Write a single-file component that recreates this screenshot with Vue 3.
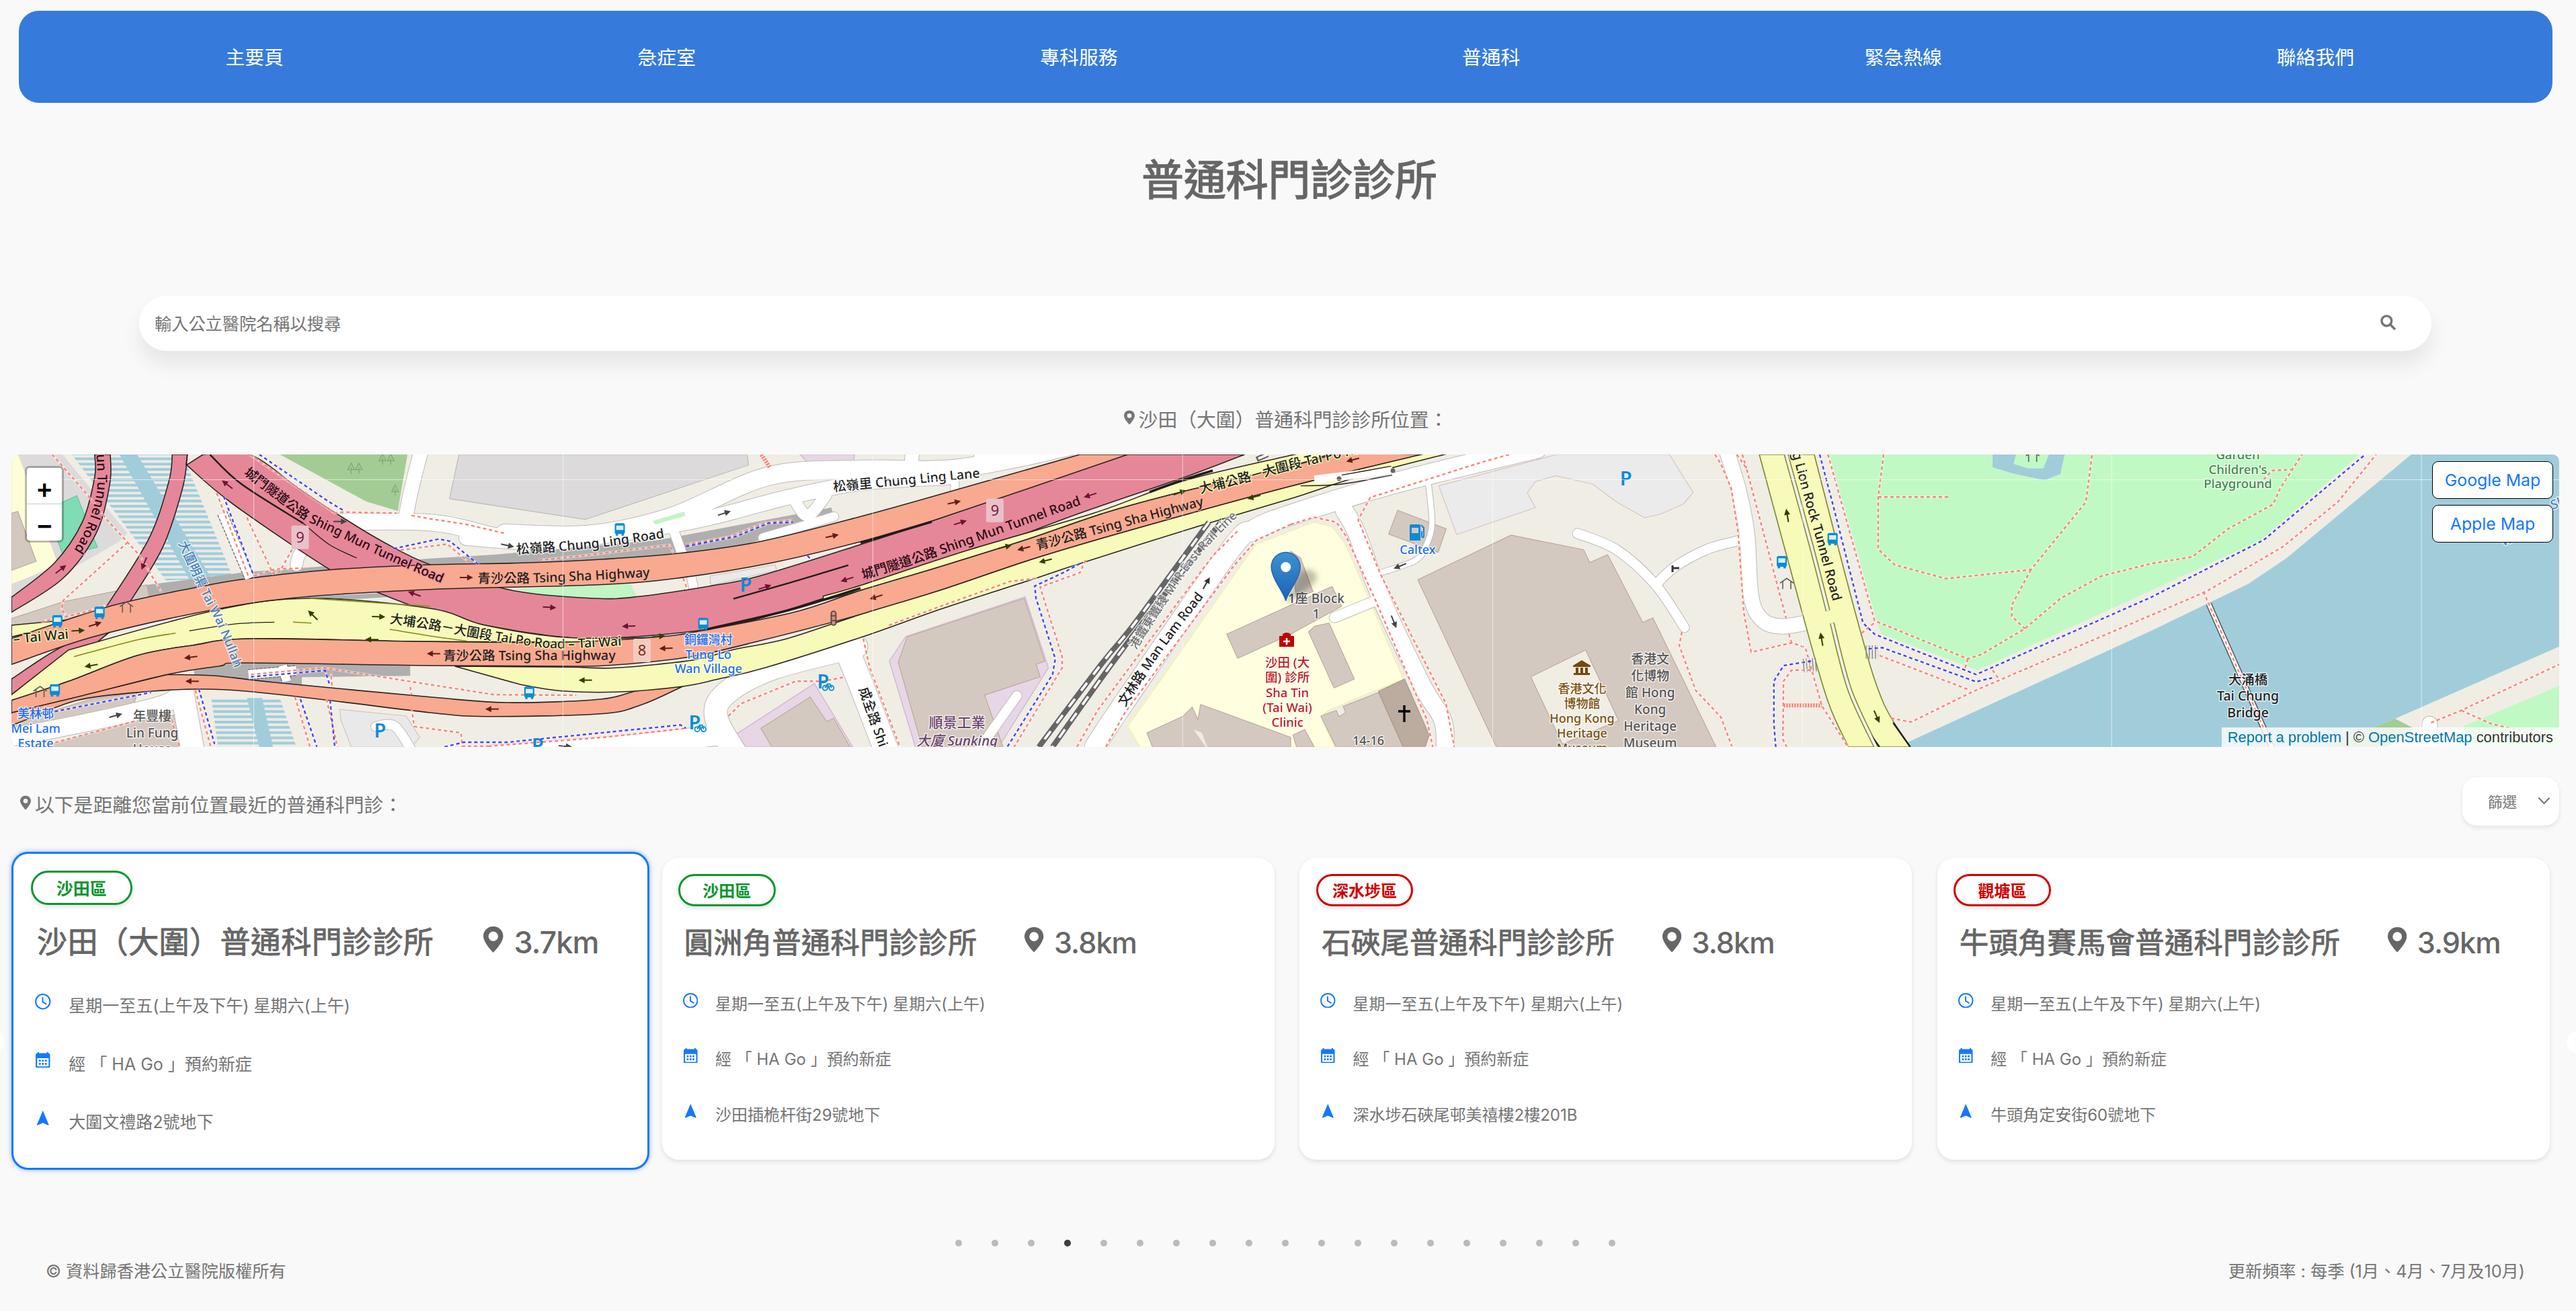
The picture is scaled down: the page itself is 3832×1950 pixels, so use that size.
<script setup>
const navItems = ['主要頁', '急症室', '專科服務', '普通科', '緊急熱線', '聯絡我們']

const clinics = [
  { district: '沙田區', tone: 'green', name: '沙田（大圍）普通科門診診所', km: '3.7km', address: '大圍文禮路2號地下', active: true },
  { district: '沙田區', tone: 'green', name: '圓洲角普通科門診診所', km: '3.8km', address: '沙田插桅杆街29號地下' },
  { district: '深水埗區', tone: 'red', name: '石硤尾普通科門診診所', km: '3.8km', address: '深水埗石硤尾邨美禧樓2樓201B' },
  { district: '觀塘區', tone: 'red', name: '牛頭角賽馬會普通科門診診所', km: '3.9km', address: '牛頭角定安街60號地下' },
]

// Map geometry is stored on a finer grid than the drawing; KX and KY scale it down.
const KX = 1 / 2.45
const KY = 1 / 3
const pt = (s) => s.trim().split(/\s+/).map((p) => {
  const [x, y] = p.split(',').map(Number)
  return [+(x * KX).toFixed(1), +(y * KY).toFixed(1)]
})
const poly = (s) => pt(s).map((p) => p.join(',')).join(' ')
const X = (x) => x * KX
const Y = (y) => y * KY

// Catmull-Rom spline through the points
const curve = (list) => {
  let d = ''
  for (let i = 0; i < list.length - 1; i++) {
    const p0 = list[i - 1] || list[i]
    const p1 = list[i]
    const p2 = list[i + 1]
    const p3 = list[i + 2] || p2
    d += `C${(p1[0] + (p2[0] - p0[0]) / 6).toFixed(1)} ${(p1[1] + (p2[1] - p0[1]) / 6).toFixed(1)} ${(p2[0] - (p3[0] - p1[0]) / 6).toFixed(1)} ${(p2[1] - (p3[1] - p1[1]) / 6).toFixed(1)} ${p2[0]} ${p2[1]}`
  }
  return d
}
const spline = (s) => { const l = pt(s); return `M${l[0].join(' ')}${curve(l)}` }
const band = (s) => {
  const [a, b] = s.split('|').map(pt)
  return `M${a[0].join(' ')}${curve(a)}L${b[0].join(' ')}${curve(b)}Z`
}

const areas = [
  ['#fdfdd8', '42,48 65,48 240,560 42,625', '#f3f2a0'],
  ['#dcdada', '68,48 228,48 465,400 430,440 280,545 150,590 42,680 42,628 212,540'],
  ['#d4c9c0', '42,310 65,302 132,525 42,565', '#bda99c'],
  ['#7fdcb5', '228,260 280,232 355,462 230,497 185,350', '#5cc9a0'],
  ['url(#nullah)', '262,48 665,48 850,600 605,610'],
  ['#a1cddb', '435,48 500,48 790,640 715,660'],
  ['url(#nullah)', '770,1135 1020,1135 1080,1353 795,1353'],
  ['#a1cddb', '900,1135 955,1135 995,1353 945,1353'],
  ['#a3cc95', '1020,48 1485,48 1450,300 1335,258'],
  ['#dcdadb', '1673,48 2723,48 2728,95 2133,338 1638,245', '#bcbaba'],
  ['#e7d6e5', '2915,48 3115,48 3110,80 2945,85', '#c9b5cc'],
  ['#d4c9c0', '42,780 230,705 535,630 545,690 42,900', '#b5a79c'],
  ['#b0afaf', '535,630 900,572 1568,512 1800,495 2400,430 3030,285 3036,312 2700,460 2400,520 1568,570 900,640 545,690'],
  ['#b0afaf', '1100,685 1568,655 1568,672 1240,698'],
  ['#b0afaf', '705,1000 900,975 1495,985 1495,1036 1100,1042 1100,1075 710,1040'],
  ['#d4c9c0', '42,1250 330,1140 500,1110 490,1155 42,1290', '#b5a79c'],
  ['#d4c9c0', '150,1353 470,1245 640,1210 650,1353', '#bda99c'],
  ['#eae9e9', '1238,1185 1480,1215 1530,1310 1500,1353 1280,1353 1242,1230', '#d4c3c3'],
  ['#eaeae8', '2588,590 2825,540 2830,565 2590,632', '#d4c3c3'],
  ['#e7d6e5', '2678,1300 2968,1070 3043,1220 3108,1353 2700,1353', '#c9b5cc'],
  ['#d4c9c0', '2773,1270 2953,1130 3013,1240 3038,1225 3098,1353 2813,1353', '#bda99c'],
  ['#e7d6e5', '3301,860 3736,683 3821,1000 3640,1353 3336,1353 3241,970', '#c9b5cc'],
  ['#d4c9c0', '3306,862 3733,690 3808,970 3776,985 3791,1040 3588,1122 3656,1353 3361,1353 3274,975', '#bda99c'],
  ['#ffffe0', '4576,450 4704,390 4789,350 4854,370 4904,450 5114,1050 4840,1190 4814,1220 4865,1353 4156,1353 4111,1260 4236,1045', '#f5f29c'],
  ['#d4c9c0', '4704,480 4740,510 4785,660 4725,690', '#bda99c'],
  ['#d4c9c0', '4471,850 4704,720 4855,637 4890,725 4704,850 4511,958', '#bda99c'],
  ['#d4c9c0', '4790,815 4844,800 4936,1050 4862,1090 4769,840', '#bda99c'],
  ['#d4c9c0', '4180,1290 4313,1215 4345,1175 4366,1230 4376,1163 4704,1310 4704,1353 4200,1353', '#bda99c'],
  ['#f0ede5', '4350,1275 4380,1290 4400,1353 4395,1353'],
  ['#d4c9c0', '4814,1215 4870,1190 4880,1217 4905,1200 4895,1172 5024,1110 5114,1353 4869,1353', '#bda99c'],
  ['#d4c9c0', '4712,1300 4755,1275 4790,1353 4725,1353', '#bda99c'],
  ['#bbac9f', '5024,1105 5119,1050 5209,1300 5194,1353 5114,1353', '#a89a8e'],
  ['#ebebeb', '5244,188 5674,48 6084,48 6171,218 6134,270 6054,313 5994,330 5894,262 5804,180 5669,143 5597,168 5566,218 5596,285 5309,405', '#d8c4c4'],
  ['#d4c9c0', '5094,297 5271,380 5241,485 5061,403', '#bda99c'],
  ['#d4c9c0', '5167,607 5507,408 5772,473 5794,530 5859,495 5987,797 6024,777 6254,1353 5454,1353', '#bda99c'],
  ['#f0ede5', '5579,1040 5779,920 5899,1235 5694,1340', '#bda99c'],
  ['#c1f9c4', '6667,48 6842,800 6857,850 7207,1010 7840,655 8240,430 8600,48'],
  ['#a1cddb', '7262,48 7525,48 7509,135 7452,163 7337,133 7262,105'],
  ['#c1f9c4', '7347,48 7467,48 7447,110 7392,110 7339,90'],
  ['#a1cddb', '6957,1330 7840,835 8195,625 8334,510 8788,48 9327,48 9327,905 8729,1227 8610,1290 8500,1353 6900,1353'],
  ['#c1f9c4', '9327,1080 8980,1260 8950,1353 9327,1353'],
  ['#a3cc95', '8729,1227 8800,1272 8700,1353 8480,1353'],
]

// [points, width] – minor roads: grey casing with a white fill
const roads = [
  ['1535,30 1500,200 1475,350', 21],
  ['1080,540 1100,480 1200,380', 18],
  ['1200,350 1568,352 1800,410 1900,430', 24],
  ['1840,400 2150,405 2450,325 2800,145 3136,115 3450,115 3700,65 3900,10', 27],
  ['1700,420 1980,440 2268,400 2568,335 2868,240 3136,175 3450,150', 22],
  ['3328,10 3318,120', 20], ['3580,30 3560,110', 18], ['3480,150 3480,210', 12],
  ['2455,385 2485,490', 14],
  ['2520,600 2530,655', 13],
  ['2900,260 2945,320 3010,230', 17],
  ['2780,420 3040,325', 13],
  ['42,1310 350,1235 600,1160 660,1100', 26],
  ['660,1080 700,1353', 34],
  ['1370,1262 1440,1262 1510,1390', 14],
  ['1800,1390 2068,1365 2300,1345 2620,1300', 30],
  ['3120,905 2820,1000 2650,1110 2610,1220 2690,1400', 34],
  ['3080,900 3146,1100 3240,1400', 36],
  ['3706,1125 3570,1360', 14],
  ['5600,20 5100,170 4704,318 4570,385 4480,480 4100,1150 3990,1353', 30],
  ['4900,300 4945,400 5030,680 5184,1080 5260,1240 5265,1400', 26],
  ['5204,160 5219,350 5199,450 5159,520 5034,575', 8],
  ['4864,775 5014,700', 15],
  ['5749,400 5894,475 6034,630 6139,820', 14],
  ['6034,630 6104,550 6224,470 6345,430', 14],
  ['6290,20 6335,200 6367,400 6382,680 6422,785 6492,815 6600,795', 22],
  ['8855,1250 8855,1400', 22],
]

const bands = [
  ['#e58799', '345,48 345,150 300,350 200,530 42,685|42,752 230,600 350,400 400,180 402,48'],
  ['#e58799', '42,1050 220,910 400,820|400,840 200,1030 42,1120'],
  ['#e58799', '628,48 615,170 540,430 370,760|450,750 590,470 665,200 683,48'],
  ['#e58799', '740,48 910,48 1100,210 1250,330 1400,440 1568,540 1868,655 2168,690 2328,682 2588,635 2768,590 3136,450 3396,345 4096,48|4536,48 4316,150 3936,310 3536,490 3136,637 2768,780 2568,830 2268,865 2068,865 1768,810 1568,750 1370,660 1200,560 850,270 680,95'],
  ['#f7fab8', '250,920 780,745 1130,690 1568,735 1768,810 2068,865 2400,864|2400,890 2068,885 1568,883 920,870 700,900 500,945 250,1060 42,1145 42,1120'],
  ['#f7fab8', '42,810 300,780|250,800 42,862'],
  ['#f9a990', '42,870 400,725 720,640 900,602 1210,562 1568,540 1900,532 2200,515 2468,490 2768,437 3136,325 3500,200 3936,48|4110,48 3396,345 3136,437 2818,530 2468,600 2168,630 1568,650 1100,685 780,740 350,858 42,985'],
  ['#f7fab8', '3000,680 3136,632 3536,472 3986,310 4316,165 4704,52 4750,40|4860,40 4704,100 4306,215 4036,305 3736,430 3436,545 3136,655 3000,700'],
  ['#f9a990', '610,1030 780,1035 1000,1065 1568,1130 1848,1155 2188,1140 2330,1100 2488,1083|2488,1083 2338,1165 2188,1205 1768,1217 1568,1200 1200,1145 900,1105 740,1095 550,1105 280,1145 42,1255 42,1200'],
  ['#f9a990', '42,1145 250,1060 500,945 700,900 920,870 1568,883 2068,885 2400,862 2568,832 2900,750 3136,655 3436,545 3736,430 4036,305 4306,215 4704,100 4880,40|5184,48 4704,190 4136,380 3776,510 3436,650 3136,762 2768,880 2518,950 2268,985 2068,993 1568,990 900,978 800,992 610,1030 280,1130 42,1200'],
  ['#f7fab8', '1658,993 2068,997 2248,1000 2528,965 2668,920 2868,870 3136,762 3436,650 3776,510 4136,380 4704,190 5190,45|5290,40 4944,150 4704,245 4336,380 3936,535 3776,600 3436,735 3136,865 2788,1000 2618,1050 2488,1083 2248,1108 2048,1103 1898,1075'],
  ['#f7fab8', '6412,48 6572,770 6662,1150 6737,1353|6962,1353 6862,1150 6772,800 6612,48'],
]

// [class, points]
const lines = [
  ['edge', '765,48 880,180 1105,355'],
  ['edge thin', '683,48 678,95'],
  ['edge thin', '1105,355 1200,450 1300,510'],
  ['edge', '2673,692 2880,620 3092,542'],
  ['olive', '270,950 500,875 640,845'],
  ['edge thin', '690,835 850,805 1000,796'],
  ['olive', '1130,690 1350,708 1568,725'],
  ['olive', '1068,796 1135,800'],
  ['olive', '1420,828 1568,858 1700,880'],
  ['edge double', '2568,830 2868,745 3136,645'],
  ['edge double', '4190,215 4316,160 4420,120'],
  ['edge double', '3136,442 3396,348'],
  ['bridge', '4790,160 5075,118'],
  ['edge thin', '4740,188 4890,180 5074,140'],
  ['edge thin', '4890,140 5070,100'],
  ['median', '6510,48 6600,450 6662,745'],
  ['median', '6677,800 6742,1100 6837,1353'],
  ['edge', '6812,1290 6850,1353'],
  ['edge', '6900,1245 6962,1353'],
  ['rail', '4620,48 4580,70'],
  ['rail', '4406,350 4136,800 4016,980 3786,1353'],
  ['rail', '4456,340 4096,910 3836,1353'],
  ['pier', '8050,715 8175,1060 8280,1353'],
  ['deck', '1030,990 1045,1060'],
  ['deck', '905,1030 1080,1012'],
  ['deck', '810,310 910,600'],
  ['ties', '6572,990 6622,985'],
  ['ties', '6800,930 6845,930'],
]
const inlaid = lines.filter((l) => ['rail', 'pier', 'deck', 'median'].includes(l[0]))
const dotted = [
  ['red', '190,48 320,230 390,340 465,440 510,500 590,665'],
  ['red', '465,440 230,700 225,740 240,765'],
  ['red', '150,795 300,755 390,720'],
  ['red', '790,220 905,590'],
  ['blue', '815,235 925,590'],
  ['red', '900,330 995,580 1020,570 1070,460'],
  ['red', '925,590 1000,560 1100,555'],
  ['red', '910,48 1220,310 1250,305 1445,310'],
  ['blue', '945,48 1200,260 1255,300'],
  ['red', '1500,320 1568,335 1700,360 1840,400'],
  ['blue', '1435,468 1600,425 1640,435 1745,540'],
  ['red', '1460,475 1630,448 1710,530'],
  ['red', '915,1030 1180,1000 1568,1075 1800,1120 2100,1122'],
  ['blue', '915,1040 1185,1012 1200,1070'],
  ['red', '1205,1010 1210,1080'], ['red', '1495,1085 1500,1120'],
  ['red', '1190,1140 1230,1353'], ['blue', '1203,1145 1220,1353'],
  ['red', '1075,1130 1130,1353'], ['blue', '1095,1140 1155,1353'],
  ['blue', '725,1095 782,1340'], ['red', '712,1100 768,1353'],
  ['blue', '200,1195 550,1110'],
  ['red', '180,1340 500,1235'], ['red', '625,1230 655,1353'],
  ['red', '1500,1180 1510,1262 1680,1290 1685,1350 1780,1350'],
  ['blue', '1620,1353 1690,1332 1850,1332 2150,1295 2480,1255 2500,1270'],
  ['red', '1780,1350 2200,1310 2500,1270'],
  ['red', '1965,520 2120,500 2440,452 2455,490'],
  ['red', '2500,450 2660,415 2780,355 2890,340'], ['blue', '2500,458 2680,415 2800,355 2890,350'],
  ['red', '2490,600 2505,650'], ['blue', '2943,500 2955,515'],
  ['red bold', '2775,48 2805,105'],
  ['red', '2655,1215 2700,1160 2900,1060 3000,1060 3075,1042'],
  ['red', '3146,870 3170,1000 3280,1353'],
  ['red', '3240,810 3440,720 3680,615 3780,600'],
  ['blue', '3936,535 3876,575 3771,635 3776,690 3846,960 3836,1030 3671,1353'],
  ['red', '3956,520 3936,575 3791,640 3871,950 3871,1000 3696,1353'],
  ['red', '4510,390 4420,500 4000,1190 3925,1353'],
  ['red', '4704,360 4580,430 4500,540 4100,1200 4030,1353'],
  ['red', '4704,360 4789,328 4870,350 4905,410 5010,690 5200,1230 5222,1353'],
  ['red', '5500,48 5394,85 4994,240 4950,340 5030,580 5270,1160 5300,1353'],
  ['red', '6130,840 6120,900 6180,1100 6272,1220 6312,1350'],
  ['red', '6250,48 6272,90 6310,200 6335,400 6355,750 6382,930 6532,888 6580,910 6640,1170 6735,1353'],
  ['red', '6330,48 6365,110 6510,780'],
  ['red', '6350,48 6365,110'],
  ['red', '6520,850 6530,890'],
  ['blue', '6600,970 6500,990 6465,1060 6465,1250 6472,1353'],
  ['red', '6600,1010 6530,1010 6500,1060 6498,1320 6512,1353'],
  ['red bold', '6500,1168 6640,1168'],
  ['blue', '6632,48 6680,270 6790,800 6832,850 7202,1030 7840,685 8250,430 8620,48'],
  ['red', '6662,48 6832,790 7172,960 7222,940 7380,825 7510,690 7660,590 7840,535 7990,505 8120,380 8285,270 8310,200 8390,48'],
  ['red', '6785,845 6830,800'],
  ['red', '7172,960 7162,1000'],
  ['red', '6865,48 6845,240 6845,470 6905,540 7092,602 7402,562 7602,260 7625,48'],
  ['red', '6845,238 7100,238'],
  ['red', '7402,562 7332,720 7332,770 7380,825'],
  ['blue', '6810,915 6860,910 7202,1062 7260,1045'],
  ['red', '6850,945 7180,1100'],
  ['red', '7262,1010 7285,1050'],
  ['red', '6892,1225 6965,1242 7192,1105 7840,765 8040,660 8320,460 8520,260 8660,48'],
  ['red', '8220,200 8280,120 8350,115'],
  ['red', '8030,660 8050,715 8175,1060 8280,1353'],
  ['red', '8860,1245 8970,1190 9327,985'],
  ['red', '8970,1190 9080,1250 9327,1320'],
]

// [x, y, rotation, colour]
const arrows = [
  [222, 560, -38, '#6d1434'], [525, 535, 112, '#6d1434'], [828, 182, 218, '#6d1434'], [1240, 347, 0, '#444'],
  [285, 834, -3, '#333d00'], [347, 806, -18, '#611f14'], [332, 990, 170, '#333d00'], [695, 953, 172, '#611f14'],
  [700, 1060, 180, '#611f14'], [1140, 765, 225, '#333d00'], [1380, 772, 2, '#333d00'], [1355, 874, 180, '#333d00'],
  [1510, 670, 200, '#6d1434'], [1580, 937, 180, '#611f14'], [422, 1213, -15, '#444'],
  [1850, 454, 12, '#444'], [1700, 597, 0, '#611f14'], [2003, 730, 4, '#6d1434'], [2291, 814, 178, '#6d1434'],
  [2400, 860, -5, '#333d00'], [2427, 913, 178, '#611f14'], [2133, 1055, 180, '#333d00'], [1793, 1184, 180, '#611f14'],
  [2640, 310, -18, '#444'], [2788, 640, -18, '#6d1434'], [3087, 605, 162, '#6d1434'], [3033, 412, -12, '#611f14'],
  [2060, 1350, 5, '#444'],
  [3478, 262, -12, '#611f14'], [3500, 352, -18, '#6d1434'], [3973, 230, 162, '#6d1434'], [3663, 460, -14, '#333d00'],
  [3731, 467, 165, '#611f14'], [3810, 522, 165, '#333d00'], [3193, 684, 162, '#611f14'], [4300, 218, -20, '#333d00'],
  [4570, 238, 165, '#333d00'], [4397, 622, -60, '#333'], [4930, 72, 165, '#611f14'],
  [5102, 546, 158, '#444'], [5080, 795, 68, '#444'],
  [6514, 320, -100, '#333d00'], [6639, 872, -100, '#333d00'], [6840, 1218, 66, '#333d00'],
]

// [text, path, size, class]
const pathLabels = [
  ['un Tunnel Road', '352,48 352,220 312,380 262,490', 20, 'pink'],
  ['大圍明渠 Tai Wai Nullah', '650,445 735,670 800,830 885,1100', 18.5, 'water'],
  ['城門隧道公路 Shing Mun Tunnel Road', '888,135 1000,240 1110,338 1230,410 1400,510 1568,600 1680,660', 19.2, 'pink'],
  ['– Tai Wai', '50,892 260,868', 20, 'yellow'],
  ['青沙公路 Tsing Sha Highway', '1741,622 2000,617 2430,590', 19.4, 'salmon'],
  ['大埔公路－大圍段 Tai Po Road – Tai Wai', '1420,800 1568,827 1700,857 1810,880 1970,908 2090,912 2330,895', 19.2, 'yellow'],
  ['青沙公路 Tsing Sha Highway', '1615,967 2300,964', 19.4, 'salmon'],
  ['松嶺路 Chung Ling Road', '1883,492 2168,465 2470,410', 19.4, ''],
  ['松嶺里 Chung Ling Lane', '3038,213 3620,145', 19.4, ''],
  ['城門隧道公路 Shing Mun Tunnel Road', '3146,605 3416,500 4000,245', 19.5, 'pink'],
  ['青沙公路 Tsing Sha Highway', '3781,475 4450,255', 19.4, 'salmon'],
  ['大埔公路－大圍段 Tai Po Road', '4376,222 4560,165 4704,115 5000,30', 19.6, 'yellow'],
  ['港鐵東鐵綫 MTR East Rail Line', '4140,920 4266,680 4386,480 4590,230', 18, 'rail'],
  ['文林路 Man Lam Road', '4100,1175 4236,925 4420,630', 19.4, ''],
  ['成全路 Shing Chuen Road', '3130,1095 3240,1480', 19.6, ''],
  ['g Lion Rock Tunnel Road', '6532,42 6575,240 6622,440 6690,750', 19.6, 'yellow'],
]
// [lines, centre x, first baseline, line step, size, class]
const labels = [
  [['美林邨', 'Mei Lam', 'Estate'], 130, 1225, 65, 18, 'place'],
  [['年豐樓', 'Lin Fung', 'House'], 555, 1236, 74, 19, 'bldg'],
  [['銅鑼灣村', 'Tung Lo', 'Wan Village'], 2582, 895, 64, 18, 'place'],
  [['順景工業'], 3488, 1265, 80, 21, 'violet'],
  [['大廈 Sunking'], 3488, 1348, 80, 20.5, 'violet italic'],
  [['1座 Block', '1'], 4797, 712, 68, 19, 'bldg'],
  [['沙田 (大', '圍) 診所', 'Sha Tin', '(Tai Wai)', 'Clinic'], 4692, 996, 67, 18.5, 'clinic'],
  [['Caltex'], 5167, 492, 60, 18, 'place'],
  [['香港文化', '博物館', 'Hong Kong', 'Heritage', 'Museum'], 5766, 1112, 66, 18, 'museum'],
  [['香港文', '化博物', '館 Hong', 'Kong', 'Heritage', 'Museum'], 6014, 980, 75, 19, 'bldg'],
  [['14-16'], 4987, 1345, 60, 18, 'bldg'],
  [['Garden', "Children's", 'Playground'], 8156, 70, 64, 18.5, 'leisure'],
  [['大涌橋', 'Tai Chung', 'Bridge'], 8193, 1074, 73, 19.5, ''],
]
const shields = [[1062, 365, '9', '#e9c1ca', '#7c1d3d'], [3594, 245, '9', '#e9c1ca', '#7c1d3d'], [2308, 870, '8', '#f4cbc1', '#7a2c1c']]
const buses = [[363, 754], [209, 792], [200, 1100], [2259, 382], [2563, 804], [1929, 1111], [6679, 425], [6494, 528]]
const parks = [[1385, 1310], [2718, 660], [1960, 1378], [2532, 1275], [3000, 1092], [5926, 187]]
const bikes = [[2552, 1268], [3018, 1084]]
const shelters = [[461, 745], [146, 1122], [6512, 640], [7408, 72]]
const trees = [[1280, 110], [1308, 110], [1394, 70], [1424, 70], [1440, 208]]
const gridX = [925, 2052, 3181, 4310, 5440, 6569, 7696, 8825]
</script>

<template>
  <div class="page">
    <nav class="nav">
      <a v-for="item in navItems" :key="item">{{ item }}</a>
    </nav>

    <h1 class="title">普通科門診診所</h1>

    <div class="search">
      <span>輸入公立醫院名稱以搜尋</span>
      <svg class="search-icon" viewBox="0 0 24 24"><circle cx="9.3" cy="9.3" r="7.4" /><path d="M14.7 14.7l7.3 7.3" /></svg>
    </div>

    <p class="caption">
      <svg class="pin" viewBox="0 0 28 37"><path fill-rule="evenodd" d="M14 0C6 0 0 6 0 13.8 0 23 14 37 14 37s14-14 14-23.2C28 6 22 0 14 0zm0 8.2a5.8 5.8 0 1 1 0 11.6 5.8 5.8 0 0 1 0-11.6z" /></svg>
      <span>沙田（大圍）普通科門診診所位置：</span>
    </p>

    <section class="map">
      <svg class="map-canvas" viewBox="17 16 3790 435" width="3790" height="435">
        <defs>
          <pattern id="nullah" width="10" height="7.83" y="20.5" patternUnits="userSpaceOnUse">
            <rect width="10" height="7.83" fill="#edebe5" /><rect width="10" height="4" fill="#a1cddb" />
          </pattern>
          <linearGradient id="markerFill" x1="0" y1="0" x2="0" y2="1">
            <stop offset="0" stop-color="#3d92cf" /><stop offset="1" stop-color="#1a62b8" />
          </linearGradient>
          <filter id="soft" x="-50%" y="-50%" width="200%" height="200%"><feGaussianBlur stdDeviation="4" /></filter>
        </defs>
        <rect x="17" y="16" width="3790" height="435" fill="#f0ede5" />
        <polygon v-for="(a, i) in areas" :key="'a' + i" :points="poly(a[1])" :fill="a[0]" :stroke="a[2] || 'none'" stroke-width="1.2" />

        <g fill="none" stroke-linecap="round" stroke-linejoin="round">
          <path v-for="(r, i) in roads" :key="'c' + i" :d="spline(r[0])" stroke="#bdbbb8" :stroke-width="r[1] + 2" />
          <path v-for="(r, i) in roads" :key="'r' + i" :d="spline(r[0])" stroke="#fff" :stroke-width="r[1]" />
        </g>
        <polygon :points="poly('1870,648 2298,625 2323,686 2168,692 1968,674')" fill="#c1f5c4" />
        <polygon :points="poly('2378,345 2493,303 2498,322 2388,360')" fill="#c1f5c4" />
        <path v-for="(b, i) in bands" :key="'b' + i" :d="band(b[1])" :fill="b[0]" :stroke="i === 11 ? '#7d8530' : '#2a2420'" stroke-width="1.6" />
        <path v-for="(l, i) in lines" :key="'l' + i" :class="l[0]" :d="spline(l[1])" fill="none" />
        <path v-for="(l, i) in inlaid" :key="'li' + i" :class="l[0] + '-in'" :d="spline(l[1])" fill="none" />
        <polyline v-for="(d, i) in dotted" :key="'h' + i" :points="poly(d[1])" class="foot-halo" />
        <polyline v-for="(d, i) in dotted" :key="'d' + i" :points="poly(d[1])" class="foot" :class="d[0]" />

        <g v-for="(a, i) in arrows" :key="'ar' + i" :transform="`translate(${X(a[0])} ${Y(a[1])}) rotate(${a[2]})`" :stroke="a[3]" :fill="a[3]">
          <path d="M-10 0H4" stroke-width="2" /><path d="M1 -4.500L10 0L1 4.500Z" stroke="none" />
        </g>

        <g fill="none" stroke="#7fa874" stroke-width="1.3">
          <path v-for="(t, i) in trees" :key="'t' + i" :transform="`translate(${X(t[0])} ${Y(t[1])})`" d="M0 8V-2M0 -8L-5 2H5Z" />
        </g>
        <g fill="none" stroke="#5d5d5d" stroke-width="1.6">
          <path v-for="(s, i) in shelters" :key="'s' + i" :transform="`translate(${X(s[0])} ${Y(s[1])})`" d="M-10 -6L0 -13L10 -6M-6 -9V3M6 -9V3" />
        </g>

        <g v-for="(b, i) in buses" :key="'bu' + i" :transform="`translate(${X(b[0]) - 7.5} ${Y(b[1]) - 9})`">
          <rect width="15" height="16" rx="2.5" fill="#0a8bd6" /><rect x="2.2" y="3.4" width="10.6" height="6.6" fill="#d5f0fb" />
          <rect x="1.5" y="15" width="3.4" height="3.4" fill="#0a8bd6" /><rect x="10" y="15" width="3.4" height="3.4" fill="#0a8bd6" />
        </g>
        <text v-for="(p, i) in parks" :key="'p' + i" :x="X(p[0])" :y="Y(p[1])" class="parking">P</text>
        <g v-for="(b, i) in bikes" :key="'bk' + i" :transform="`translate(${X(b[0])} ${Y(b[1])})`" fill="none" stroke="#0a8bd6" stroke-width="1.8">
          <circle cx="-4.5" cy="2" r="3.6" /><circle cx="5" cy="2" r="3.6" /><path d="M-4.5 2L-1 -4H3L5 2M-1 -4L1 2" />
        </g>

        <g v-for="(s, i) in shields" :key="'sh' + i">
          <rect :x="X(s[0])" :y="Y(s[1])" width="26" height="35" rx="2.5" :fill="s[3]" />
          <text :x="X(s[0]) + 13" :y="Y(s[1]) + 25" class="shield" :fill="s[4]">{{ s[2] }}</text>
        </g>

        <g v-for="(l, i) in pathLabels" :key="'pl' + i">
          <path :id="'way' + i" :d="spline(l[1])" fill="none" />
          <text class="label" :class="l[3]" :font-size="l[2]"><textPath :href="'#way' + i">{{ l[0] }}</textPath></text>
        </g>
        <text v-for="(l, i) in labels" :key="'lb' + i" class="label mid" :class="l[5]" :font-size="l[4]">
          <tspan v-for="(t, j) in l[0]" :key="j" :x="X(l[1])" :y="Y(l[2] + j * l[3])">{{ t }}</tspan>
        </text>

        <!-- fuel pump -->
        <g transform="translate(2097 120)" fill="#0a8bd6">
          <path d="M0 2q0-2 2-2h12q2 0 2 2v22H0zM3 5v8h10V5z" fill-rule="evenodd" />
          <path d="M17 1l4 4v13q-1 3-3 0v-7h-1" fill="none" stroke="#0a8bd6" stroke-width="2" />
        </g>
        <!-- clinic -->
        <path d="M1903 286h22v16h-22zM1908 286v-3q6-4 12 0v3" fill="#bf0000" />
        <path d="M1914 289v10M1909 294h10" stroke="#fff" stroke-width="2.6" />
        <!-- museum -->
        <path d="M2340 330l13-8 13 8v2h-26zM2344 333h4v8h-4zM2351 333h4v8h-4zM2358 333h4v8h-4zM2341 341h24v3h-24z" fill="#734a08" />
        <!-- church -->
        <path d="M2089 389v25M2080 398h18" stroke="#000" stroke-width="3.4" />
        <!-- gate -->
        <path d="M2488 181v10M2488 185h10" stroke="#333" stroke-width="3" />
        <!-- traffic light -->
        <rect x="1236.5" y="249" width="7" height="21" rx="3.5" fill="#d98b78" stroke="#444" stroke-width="1.7" />
        <path d="M1237 256h6M1237 263h6" stroke="#444" stroke-width="1.7" />
        <circle cx="1992" cy="52" r="3.5" fill="#666" /><circle cx="2072" cy="40" r="3.5" fill="#666" />
        <text x="3797" y="98" class="label water" font-size="19" transform="rotate(-20 3797 98)">Sh</text>
        <text x="3724" y="152" class="label water" font-size="19" transform="rotate(-20 3724 152)">w</text>

        <g stroke="#fff" stroke-opacity=".6">
          <path v-for="x in gridX" :key="x" :d="`M${X(x)} 16V451`" /><path d="M17 53.5H3807" />
        </g>

        <!-- location marker -->
        <path d="M1914 232l16-36q12-14 24-6t-4 22l-36 26z" fill="#000" opacity=".25" filter="url(#soft)" />
        <path d="M1912.700 233.500c-3-13-21.500-33-21.500-50.500a21.500 21.500 0 0 1 43 0c0 17.500-18.500 37.500-21.500 50.500z" fill="url(#markerFill)" stroke="#2467a8" stroke-width="1.5" />
        <circle cx="1912.700" cy="183.500" r="7.500" fill="#fff" />
      </svg>

      <div class="zoom-control"><a>+</a><a>−</a></div>
      <div class="map-links"><a>Google Map</a><a>Apple Map</a></div>
      <div class="attribution"><a>Report a problem</a> | © <a>OpenStreetMap</a> contributors</div>
    </section>

    <div class="list-head">
      <p>
        <svg class="pin" viewBox="0 0 28 37"><path fill-rule="evenodd" d="M14 0C6 0 0 6 0 13.8 0 23 14 37 14 37s14-14 14-23.2C28 6 22 0 14 0zm0 8.2a5.8 5.8 0 1 1 0 11.6 5.8 5.8 0 0 1 0-11.6z" /></svg>
        <span>以下是距離您當前位置最近的普通科門診：</span>
      </p>
      <button class="filter">
        <span>篩選</span>
        <svg viewBox="0 0 20 12"><path d="M1.500 1.500L10 10.200L18.500 1.500" /></svg>
      </button>
    </div>

    <section class="slider">
      <span class="arrow prev">‹</span>
      <div v-for="c in clinics" :key="c.name" class="slot">
        <article class="card" :class="{ active: c.active }">
          <span class="badge" :class="c.tone">{{ c.district }}</span>
          <div class="card-head">
            <h2>{{ c.name }}</h2>
            <svg class="big-pin" viewBox="0 0 28 37"><path fill-rule="evenodd" d="M14 0C6 0 0 6 0 13.8 0 23 14 37 14 37s14-14 14-23.2C28 6 22 0 14 0zm0 7.200a6.800 6.800 0 1 1 0 13.600 6.800 6.800 0 0 1 0-13.600z" /></svg>
            <strong>{{ c.km }}</strong>
          </div>
          <ul>
            <li>
              <svg viewBox="0 0 22 22" fill="none" stroke="#1677ff" stroke-width="1.900"><circle cx="11" cy="11" r="10" /><path d="M10.700 5v6.500l5.300 3.200" /></svg>
              <span>星期一至五(上午及下午) 星期六(上午)</span>
            </li>
            <li>
              <svg viewBox="0 0 22 22" fill="#1677ff"><path fill-rule="evenodd" d="M3.500 1.500V0h2v1.500h11V0h2v1.500Q21 1.500 21 4v16q0 2-2 2H3q-2 0-2-2V4q0-2.500 2.500-2.500zM3 8.500V20h16V8.500zM5.500 10.500h2.600v2.600H5.500zm4.200 0h2.600v2.600H9.700zm4.200 0h2.600v2.600h-2.600zM5.500 15h2.600v2.600H5.500zm4.200 0h2.600v2.600H9.700zm4.200 0h2.600v2.600h-2.600z" /></svg>
              <span>經 「 HA Go 」預約新症</span>
            </li>
            <li>
              <svg viewBox="0 0 22 22" fill="#1677ff"><path d="M11 1L19.300 20.500l-.8.700L11 18l-7.500 3.200-.8-.7z" /></svg>
              <span>{{ c.address }}</span>
            </li>
          </ul>
        </article>
      </div>
      <span class="arrow next">›</span>
    </section>

    <div class="dots"><i v-for="n in 19" :key="n" :class="{ on: n === 4 }"></i></div>

    <footer class="footer">
      <span>© 資料歸香港公立醫院版權所有</span>
      <span>更新頻率 : 每季 (1月、4月、7月及10月)</span>
    </footer>
  </div>
</template>

<style>
body {
  background: #f9f9f9;
}
</style>

<style scoped>
.page {
  width: 3832px;
  height: 1950px;
  overflow: hidden;
  box-sizing: border-box;
  padding-top: 16px;
  background: #f9f9f9;
  color: #757575;
  font-family: Inter, 'Noto Sans CJK TC', sans-serif;
  display: flex;
  flex-direction: column;
}
.page * { box-sizing: border-box; }
h1, h2, p, ul { margin: 0; padding: 0; }

.nav {
  flex: none;
  display: grid;
  grid-template-columns: repeat(6, 1fr);
  align-items: center;
  height: 137px;
  margin: 0 35px 0 28px;
  padding: 0 46px 3px 44px;
  border-radius: 30px;
  background: #367bdb;
  color: #fff;
  font-size: 28.8px;
  text-align: center;
}
.title {
  flex: none;
  height: 90px;
  margin-top: 69px;
  padding-left: 4px;
  line-height: 90px;
  text-align: center;
  font-size: 62.8px;
  font-weight: 400;
  color: #666;
  -webkit-text-stroke: 1.6px #666;
}
.search {
  flex: none;
  display: flex;
  align-items: center;
  justify-content: space-between;
  height: 82px;
  margin: 128px 215px 0 207px;
  padding: 0 52px 2px 23px;
  border-radius: 41px;
  background: #fff;
  box-shadow: 0 20px 30px rgba(0, 0, 0, .08);
  font-size: 25.2px;
}
.search-icon {
  width: 24px;
  height: 24px;
  fill: none;
  stroke: #757575;
  stroke-width: 3.4;
}
.caption {
  flex: none;
  display: flex;
  justify-content: center;
  height: 40px;
  margin-top: 83px;
  padding-right: 6px;
  line-height: 40px;
  font-size: 28.8px;
}
.pin {
  flex: none;
  width: 16px;
  height: 22px;
  margin: 5px 6px 0 0;
  fill: #757575;
}

.map {
  flex: none;
  position: relative;
  width: 3790px;
  height: 435px;
  margin: 31px 0 0 17px;
  border-radius: 10px;
  overflow: hidden;
}
.map-canvas { display: block; }
.zoom-control {
  position: absolute;
  left: 20px;
  top: 17px;
  width: 58px;
  border: 3px solid rgba(0, 0, 0, .25);
  border-radius: 7px;
  background: #fff;
  background-clip: padding-box;
  color: #000;
  font: bold 38px/66px 'Liberation Sans', sans-serif;
  text-align: center;
}
.zoom-control a { display: block; height: 54px; }
.zoom-control a:first-child { border-bottom: 1px solid #ccc; }
.map-links {
  position: absolute;
  top: 10px;
  right: 9px;
  display: grid;
  gap: 9px;
}
.map-links a {
  width: 180px;
  height: 56px;
  border: 1px solid #000;
  border-radius: 9px;
  background: #fff;
  color: #1677ff;
  font-size: 24.8px;
  line-height: 54px;
  text-align: center;
}
.attribution {
  position: absolute;
  right: 0;
  bottom: 0;
  height: 29px;
  padding: 0 9px;
  background: rgba(255, 255, 255, .8);
  color: #333;
  font: 21.9px/30px 'Liberation Sans', sans-serif;
}
.attribution a { color: #0078a8; }

.label {
  font-family: 'Noto Sans', 'Noto Sans CJK TC', sans-serif;
  font-weight: 500;
  fill: #222;
  stroke: rgba(255, 255, 255, .7);
  stroke-width: 3px;
  stroke-linejoin: round;
  paint-order: stroke;
}
.mid { text-anchor: middle; }
.pink { fill: #2b0a14; stroke: rgba(229, 135, 153, .8); }
.salmon { stroke: rgba(249, 169, 144, .8); }
.yellow { stroke: rgba(247, 250, 184, .85); }
.label.water { fill: #4d80b3; }
.label.rail { fill: #777; }
.place { fill: #1a6ef0; }
.bldg { fill: #555; }
.violet { fill: #6a4470; }
.italic { font-style: italic; }
.clinic { fill: #bf1a25; }
.museum { fill: #7a5210; }
.leisure { fill: #3f8a48; }
.parking {
  font: 600 29px 'Noto Sans', sans-serif;
  fill: #0a8bd6;
  text-anchor: middle;
}
.shield { font: 22px 'Noto Sans', sans-serif; text-anchor: middle; }

.edge { stroke: #221c1c; stroke-width: 2.4; }
.edge.thin { stroke-width: 1.3; }
.edge.double { stroke-width: 3.6; }
.olive { stroke: #808a1a; stroke-width: 1.6; }
.bridge { stroke: #fff; stroke-width: 12; }
.median { stroke: #7d8530; stroke-width: 7; }
.median-in { stroke: #f3f1ea; stroke-width: 4; }
.rail { stroke: #666; stroke-width: 8; }
.rail-in { stroke: #fff; stroke-width: 3.6; stroke-dasharray: 15 15; }
.label.rail { stroke: rgba(255, 255, 255, .7); stroke-width: 3px; }
.pier { stroke: #555; stroke-width: 9; }
.pier-in { stroke: #fff; stroke-width: 6; }
.deck { stroke: #777; stroke-width: 16; stroke-dasharray: 4 2; }
.deck-in { stroke: #fff; stroke-width: 13; }
.ties { stroke: #888; stroke-width: 20; stroke-dasharray: 1.5 3; }
.foot-halo { fill: none; stroke: rgba(255, 255, 255, .45); stroke-width: 4; }
.foot { fill: none; stroke-width: 2.4; stroke-dasharray: 5 4; }
.foot.red { stroke: #fa8478; }
.foot.blue { stroke: #4444f2; }
.foot.bold { stroke-width: 6; stroke-dasharray: 2.5 1.5; }

.list-head {
  flex: none;
  display: flex;
  justify-content: space-between;
  height: 72px;
  margin: 45px 25px 0 30px;
}
.list-head p {
  display: flex;
  padding-top: 22px;
  font-size: 28.8px;
  line-height: 40px;
}
.filter {
  display: flex;
  align-items: center;
  justify-content: space-between;
  width: 144px;
  height: 72px;
  padding: 0 13px 2px 38px;
  border: 0;
  border-radius: 21px;
  background: #fff;
  box-shadow: 0 3px 6px rgba(0, 0, 0, .09);
  color: #757575;
  font: 21.6px Inter, 'Noto Sans CJK TC', sans-serif;
}
.filter svg { width: 19px; height: 12px; fill: none; stroke: #757575; stroke-width: 2.2; }

.slider {
  flex: none;
  position: relative;
  display: flex;
  height: 473px;
  margin-top: 39px;
  padding-left: 17px;
}
.slot { flex: none; width: 948.6px; padding: 9px 19px 0; }
.card {
  width: 911px;
  height: 449px;
  padding: 1em 1.02em;
  border-radius: 25px;
  background: #fff;
  box-shadow: 0 3px 7px rgba(0, 0, 0, .1);
  font-size: 24px;
}
.slot:has(.active) { padding: 0; }
.card.active {
  width: 949px;
  height: 473px;
  padding: 25px 26px;
  border: 3px solid #1677ff;
  box-shadow: 0 0 7px rgba(22, 119, 255, .5);
  font-size: 25px;
}
.badge {
  display: flex;
  align-items: center;
  justify-content: center;
  width: 6.02em;
  height: 2.02em;
  padding-bottom: 1px;
  border: 3px solid;
  border-radius: 1.05em;
  box-shadow: 0 3px 6px rgba(0, 0, 0, .12);
  font-weight: 700;
}
.green { color: #0a9630; }
.red { color: #cf0000; }
.card-head {
  display: flex;
  height: 2.5em;
  margin: 1em 0 0 .36em;
  color: #666;
  line-height: 2.5em;
}
.card h2, .card strong {
  font-size: 1.8em;
  line-height: 1.39em;
  font-weight: 400;
  white-space: nowrap;
}
.card h2 {
  letter-spacing: .009em;
  -webkit-text-stroke: .9px #666;
}
.card strong { font-weight: 500; letter-spacing: -.022em; }
.big-pin {
  flex: none;
  width: 1.18em;
  height: 1.56em;
  margin: .28em .64em 0 2.95em;
  fill: #666;
}
.card ul { list-style: none; margin: 1.44em 0 0 .28em; }
.card.active ul { margin: 35px 0 0 6px; }
.card li {
  display: flex;
  height: 3.43em;
  line-height: 2em;
}
.card.active li { height: 86.5px; }
.card li svg { flex: none; width: .94em; height: .94em; margin: .4em 1.07em 0 0; }
.card li span { white-space: pre; padding-top: .12em; }
.arrow {
  position: absolute;
  top: 267px;
  width: 32px;
  height: 32px;
  border-radius: 50%;
  background: #fff;
  color: #f4f4f4;
  font-size: 28px;
  line-height: 28px;
  text-align: center;
}
.prev { left: -26px; }
.next { left: 3818px; }

.dots {
  flex: none;
  display: flex;
  justify-content: center;
  gap: 44.4px;
  margin-top: 104px;
  padding-right: 8px;
}
.dots i { width: 9.6px; height: 9.6px; border-radius: 50%; background: #bbb; }
.dots .on { background: #3e3e3e; }
.footer {
  flex: none;
  display: flex;
  justify-content: space-between;
  height: 36px;
  margin: 19px 76px 0 68px;
  font-size: 25.2px;
  line-height: 36px;
}
</style>
